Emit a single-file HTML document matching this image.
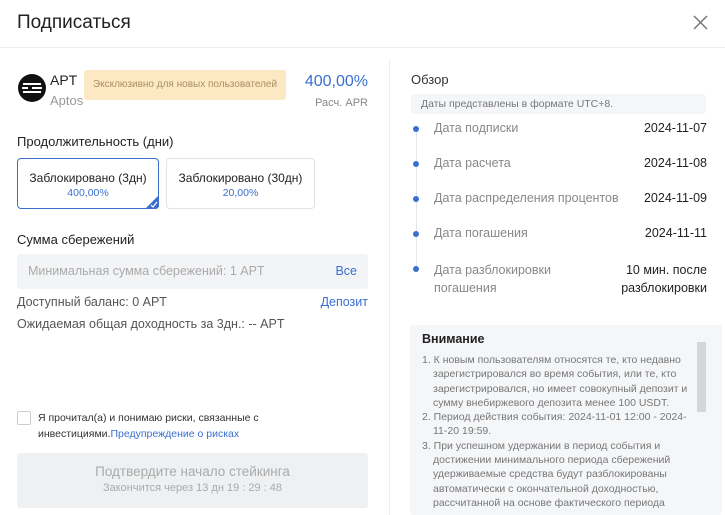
<!DOCTYPE html>
<html><head><meta charset="utf-8"><style>
*{margin:0;padding:0;box-sizing:border-box}
body{width:725px;height:515px;overflow:hidden;background:#fff;font-family:"Liberation Sans","Noto Sans CJK SC",sans-serif;color:#222;position:relative}
.a{position:absolute;white-space:nowrap}
.g{color:#888}.b{color:#3a6fd0}
</style></head><body>
<div class="a" style="left:17px;top:12px;font-size:19px;font-weight:500">Подписаться</div>
<svg class="a" style="left:693px;top:15px" width="15" height="15"><path d="M1 1L14 14M14 1L1 14" stroke="#777" stroke-width="1.5"/></svg>
<div class="a" style="left:0;top:47px;width:725px;height:1px;background:#ececec"></div>
<div class="a" style="left:389px;top:60px;width:1px;height:455px;background:#ececec"></div>

<svg class="a" style="left:18px;top:74px" width="28" height="28"><circle cx="14" cy="14" r="14" fill="#111"/><path d="M5 10H23M4 14H10M14 14H24M5 18H23" stroke="#fff" stroke-width="2"/></svg>
<div class="a" style="left:50px;top:72px;font-size:14px">APT</div>
<div class="a g" style="left:50px;top:93px;font-size:13px;color:#999">Aptos</div>
<div class="a" style="left:84px;top:70px;width:202px;height:30px;background:#fde8c4;border-radius:3px;font-size:10px;color:#a89060;line-height:30px;text-align:center">Эксклюзивно для новых пользователей</div>
<div class="a b" style="right:357px;top:73px;font-size:16px">400,00%</div>
<div class="a g" style="right:357px;top:97px;font-size:11px">Расч. APR</div>

<div class="a" style="left:17px;top:134px;font-size:13px">Продолжительность (дни)</div>
<div class="a" style="left:17px;top:158px;width:142px;height:51px;border:1px solid #3a6fd0;border-radius:4px;text-align:center">
<div style="font-size:12px;margin-top:12px">Заблокировано (3дн)</div><div class="b" style="font-size:10.5px;margin-top:2px">400,00%</div>
<svg style="position:absolute;right:-1px;bottom:-1px" width="14" height="14"><path d="M14 0V10Q14 14 10 14H0Z" fill="#3a6fd0"/><path d="M6 10L8 12L12 7" stroke="#fff" stroke-width="1.2" fill="none"/></svg></div>
<div class="a" style="left:166px;top:158px;width:149px;height:51px;border:1px solid #e3e3e3;border-radius:4px;text-align:center">
<div style="font-size:12px;margin-top:12px">Заблокировано (30дн)</div><div class="b" style="font-size:10.5px;margin-top:2px">20,00%</div></div>

<div class="a" style="left:17px;top:232px;font-size:13px">Сумма сбережений</div>
<div class="a" style="left:17px;top:254px;width:351px;height:35px;background:#f3f4f6;border-radius:3px"></div>
<div class="a" style="left:28px;top:264px;font-size:12.5px;color:#aaa">Минимальная сумма сбережений: 1 APT</div>
<div class="a b" style="right:368px;top:264px;font-size:12.5px">Все</div>
<div class="a" style="left:17px;top:295px;font-size:12.5px;color:#555">Доступный баланс: 0 APT</div>
<div class="a b" style="right:357px;top:295px;font-size:12.5px">Депозит</div>
<div class="a" style="left:17px;top:317px;font-size:12.5px;color:#555">Ожидаемая общая доходность за 3дн.: -- APT</div>

<div class="a" style="left:17px;top:411px;width:14px;height:14px;border:1px solid #ccc;border-radius:2px"></div>
<div class="a" style="left:38px;top:410px;font-size:10.5px;color:#333;line-height:16px">Я прочитал(а) и понимаю риски, связанные с<br>инвестициями.<span class="b">Предупреждение о рисках</span></div>
<div class="a" style="left:17px;top:453px;width:351px;height:55px;background:#eef0f2;border-radius:3px;text-align:center;color:#aaa">
<div style="font-size:13.5px;margin-top:11px">Подтвердите начало стейкинга</div><div style="font-size:11px;margin-top:3px">Закончится через 13 дн 19 : 29 : 48</div></div>

<div class="a" style="left:411px;top:72px;font-size:13px;color:#333">Обзор</div>
<div class="a" style="left:411px;top:94px;width:295px;height:20px;background:#f5f6f8;border-radius:3px;font-size:10.5px;color:#777;line-height:20px;padding-left:10px">Даты представлены в формате UTC+8.</div>
<div class="a" style="left:416px;top:130px;width:1px;height:140px;background:#e4e6ea"></div>
<div class="a" style="left:413px;top:126px;width:6px;height:6px;border-radius:50%;background:#3a6fd0"></div>
<div class="a" style="left:413px;top:161px;width:6px;height:6px;border-radius:50%;background:#3a6fd0"></div>
<div class="a" style="left:413px;top:196px;width:6px;height:6px;border-radius:50%;background:#3a6fd0"></div>
<div class="a" style="left:413px;top:231px;width:6px;height:6px;border-radius:50%;background:#3a6fd0"></div>
<div class="a" style="left:413px;top:266px;width:6px;height:6px;border-radius:50%;background:#3a6fd0"></div>
<div class="a g" style="left:434px;top:121px;font-size:12.5px">Дата подписки</div><div class="a" style="right:18px;top:121px;font-size:12.5px">2024-11-07</div>
<div class="a g" style="left:434px;top:156px;font-size:12.5px">Дата расчета</div><div class="a" style="right:18px;top:156px;font-size:12.5px">2024-11-08</div>
<div class="a g" style="left:434px;top:191px;font-size:12.5px">Дата распределения процентов</div><div class="a" style="right:18px;top:191px;font-size:12.5px">2024-11-09</div>
<div class="a g" style="left:434px;top:226px;font-size:12.5px">Дата погашения</div><div class="a" style="right:18px;top:226px;font-size:12.5px">2024-11-11</div>
<div class="a g" style="left:434px;top:261px;font-size:12.5px;line-height:18px">Дата разблокировки<br>погашения</div><div class="a" style="right:18px;top:261px;font-size:12.5px;line-height:18px;text-align:right">10 мин. после<br>разблокировки</div>

<div class="a" style="left:410px;top:325px;width:312px;height:190px;background:#f5f6f8;border-radius:3px;overflow:hidden">
<div style="position:absolute;left:12px;top:7px;font-size:12.5px;font-weight:bold;color:#222">Внимание</div>
<div style="position:absolute;left:287px;top:17px;width:9px;height:70px;background:#d4d6da"></div>
<div style="position:absolute;left:12px;top:28px;width:275px;font-size:10.5px;color:#777;line-height:14.3px;white-space:normal">
<div style="padding-left:11px;text-indent:-11px">1. К новым пользователям относятся те, кто недавно зарегистрировался во время события, или те, кто зарегистрировался, но имеет совокупный депозит и сумму внебиржевого депозита менее 100 USDT.</div>
<div style="padding-left:11px;text-indent:-11px">2. Период действия события: 2024-11-01 12:00 - 2024-11-20 19:59.</div>
<div style="padding-left:11px;text-indent:-11px">3. При успешном удержании в период события и достижении минимального периода сбережений удерживаемые средства будут разблокированы автоматически с окончательной доходностью, рассчитанной на основе фактического периода</div>
</div></div>
</body></html>
